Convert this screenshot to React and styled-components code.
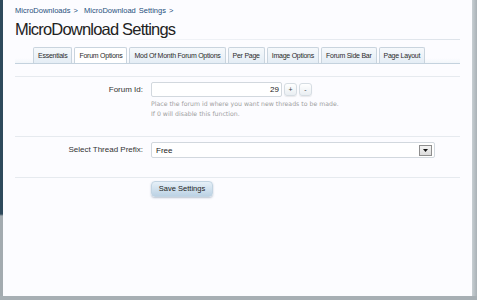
import React from 'react';
import styled, { createGlobalStyle } from 'styled-components';

const Global = createGlobalStyle`
    html, body { margin: 0; padding: 0; }
    body {
        width: 477px;
        height: 300px;
        overflow: hidden;
        background: #a7afb4;
        font-family: "Liberation Sans", Arial, sans-serif;
    }
`;

const Page = styled.div`
    display: flex;
    width: 477px;
    height: 296px;
`;

const LeftEdge = styled.div`
    flex-shrink: 0;
    width: 3px;
    background: linear-gradient(to bottom, #2f4a5c 0, #2f4a5c 214px, #a3abb0 216px);
`;

const RightEdge = styled.div`
    flex-shrink: 0;
    width: 5px;
    background: linear-gradient(to right, #c8cfd3, #a9b1b6);
`;

const Panel = styled.div`
    flex: 1;
    min-width: 0;
    overflow: hidden;
    background: #fcfcff;
    padding: 0 12px;
    display: flex;
    flex-direction: column;
`;

const Crumbs = styled.div`
    margin-top: 6px;
    font-size: 7.5px;
    color: #1f4f7c;
    word-spacing: 1px;
`;

const Title = styled.h1`
    margin: 4px 0 0;
    font-family: "Liberation Sans", Arial, sans-serif;
    font-weight: normal;
    font-size: 16.5px;
    letter-spacing: -0.8px;
    color: #222;
    height: 20px;
    line-height: 20px;
    border-bottom: 1px solid;
    border-image: linear-gradient(to right, rgba(220,226,234,0), #dde3ea) 1;
`;

const Tabs = styled.div`
    display: flex;
    gap: 2px;
    padding-left: 18px;
    margin-top: 7px;
    border-bottom: 1px solid #c4d2de;
    background: linear-gradient(to bottom, rgba(255,255,255,0) 70%, #f2f6fa 100%);
`;

const Tab = styled.div`
    flex-shrink: 0;
    white-space: nowrap;
    height: 15px;
    line-height: 15px;
    padding: 0 4px;
    font-size: 7px;
    letter-spacing: -0.25px;
    color: #2a2a2a;
    border: 1px solid #c9d4de;
    border-bottom: none;
    border-radius: 2px 2px 0 0;
    background: ${(p) => (p.active ? '#ffffff' : 'linear-gradient(to bottom, #f6f9fc, #e4edf5)')};
    margin-bottom: ${(p) => (p.active ? '-1px' : '0')};
`;

const Divider = styled.div`
    height: 1px;
    background: #e6eaef;
`;

const Row = styled.div`
    display: grid;
    grid-template-columns: 128px 1fr;
    column-gap: 8px;
    padding: ${(p) => p.pad || '6px 0'};
`;

const Label = styled.div`
    text-align: right;
    font-size: 8px;
    color: #333;
    line-height: 15px;
`;

const Field = styled.div`
    display: flex;
    flex-direction: column;
`;

const Line = styled.div`
    display: flex;
    align-items: center;
    gap: 2px;
`;

const NumInput = styled.div`
    width: 127px;
    height: 13px;
    line-height: 13px;
    border: 1px solid #d2d8de;
    border-radius: 2px;
    background: #fff;
    text-align: right;
    padding-right: 2px;
    font-size: 8px;
    color: #222;
`;

const Spin = styled.div`
    width: 11px;
    height: 11px;
    border: 1px solid #d6dde3;
    border-radius: 3px;
    background: linear-gradient(to bottom, #ffffff, #e9eef2);
    font-size: 7px;
    line-height: 11px;
    text-align: center;
    color: #444;
    box-shadow: 0 1px 1px rgba(0,0,0,0.08);
`;

const Hint = styled.div`
    margin-top: 2px;
    font-family: "DejaVu Sans", Verdana, sans-serif;
    font-size: 6.2px;
    line-height: 10px;
    color: #a0a0a0;
`;

const Select = styled.div`
    width: 278px;
    height: 14px;
    border: 1px solid #d2d8de;
    border-radius: 2px;
    background: #fff;
    display: flex;
    align-items: center;
    justify-content: space-between;
    padding-left: 4px;
    font-size: 8px;
    color: #222;
`;

const Arrow = styled.div`
    width: 11px;
    height: 9px;
    margin-right: 2px;
    border: 1px solid #8e8e8e;
    background: linear-gradient(to bottom, #f4f4f4, #dcdcdc);
    display: flex;
    align-items: center;
    justify-content: center;
`;

const SaveBtn = styled.div`
    width: 60px;
    height: 14px;
    line-height: 14px;
    text-align: center;
    font-size: 7.5px;
    color: #222;
    border-radius: 4px;
    background: linear-gradient(to bottom, #e6f0f8, #bcd2e4);
    border: 1px solid #c2d4e2;
    box-shadow: 0 1px 2px rgba(60,90,120,0.35);
`;

const tabs = [
    'Essentials',
    'Forum Options',
    'Mod Of Month Forum Options',
    'Per Page',
    'Image Options',
    'Forum Side Bar',
    'Page Layout',
];

export default function App() {
    return (
        <>
            <Global />
            <Page>
                <LeftEdge />
                <Panel>
                    <Crumbs>MicroDownloads &gt;&nbsp; MicroDownload Settings &gt;</Crumbs>
                    <Title>MicroDownload Settings</Title>
                    <Tabs>
                        {tabs.map((t) => (
                            <Tab key={t} active={t === 'Forum Options'}>{t}</Tab>
                        ))}
                    </Tabs>
                    <div style={{ height: 12 }} />
                    <Divider />
                    <Row pad="5px 0 17px">
                        <Label>Forum Id:</Label>
                        <Field>
                            <Line>
                                <NumInput>29</NumInput>
                                <Spin>+</Spin>
                                <Spin>-</Spin>
                            </Line>
                            <Hint>
                                Place the forum id where you want new threads to be made.
                                <br />
                                If 0 will disable this function.
                            </Hint>
                        </Field>
                    </Row>
                    <Divider />
                    <Row pad="5px 0 19px">
                        <Label>Select Thread Prefix:</Label>
                        <Select>
                            Free
                            <Arrow>
                                <svg width="5" height="3" viewBox="0 0 5 3">
                                    <path d="M0 0h5L2.5 3z" fill="#111" />
                                </svg>
                            </Arrow>
                        </Select>
                    </Row>
                    <Divider />
                    <Row pad="3px 0">
                        <div />
                        <SaveBtn>Save Settings</SaveBtn>
                    </Row>
                </Panel>
                <RightEdge />
            </Page>
        </>
    );
}
